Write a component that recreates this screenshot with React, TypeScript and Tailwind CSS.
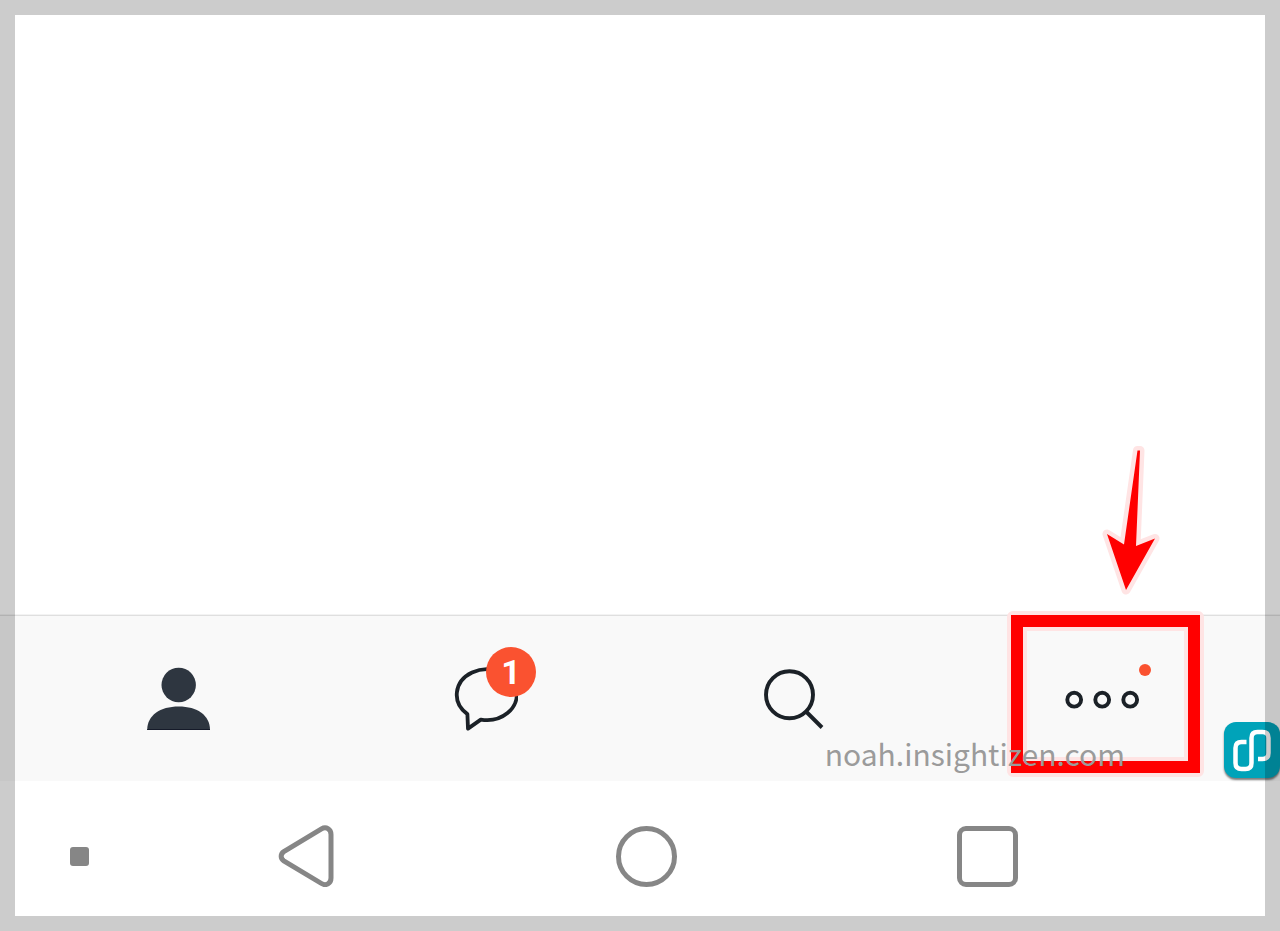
import type { ReactNode } from "react";

function TabButton({ label, children }: { label: string; children: ReactNode }) {
  return (
    <button
      type="button"
      aria-label={label}
      className="relative flex w-full items-center justify-center py-[50px]"
    >
      {children}
    </button>
  );
}

function FriendsIcon() {
  return (
    <svg width="64" height="65" viewBox="0 0 64 65" fill="#2e3640" aria-hidden="true">
      <circle cx="32.7" cy="19" r="17.2" />
      <path d="M1.2 64C1.2 49.5 14 40.6 32.7 40.6S64 49.5 64 64Z" />
      <path d="M1.2 63.5H64" stroke="#151a29" strokeWidth="1" />
    </svg>
  );
}

function ChatIcon() {
  return (
    <svg
      width="64"
      height="65"
      viewBox="0 0 64 65"
      fill="none"
      stroke="#1b2127"
      strokeWidth="3.8"
      strokeLinejoin="round"
      aria-hidden="true"
    >
      <path d="M13.4 48.1A30 25.4 0 1 1 26.8 53.6L14 62.6Z" />
    </svg>
  );
}

function SearchIcon() {
  return (
    <svg
      width="64"
      height="65"
      viewBox="0 0 64 65"
      fill="none"
      stroke="#1b2127"
      strokeWidth="3.9"
      aria-hidden="true"
    >
      <circle cx="27.5" cy="28.8" r="23.5" />
      <path d="M43.5 45L60 61.5" />
    </svg>
  );
}

function MoreIcon() {
  return (
    <svg
      width="80"
      height="65"
      viewBox="0 0 80 65"
      fill="none"
      stroke="#1b2127"
      strokeWidth="3.9"
      aria-hidden="true"
    >
      <circle cx="12.2" cy="33.7" r="6.9" />
      <circle cx="40.2" cy="33.7" r="6.9" />
      <circle cx="68.2" cy="33.7" r="6.9" />
    </svg>
  );
}

function Callout() {
  return (
    <div className="pointer-events-none absolute -top-[5px] left-1/2 z-10 h-[166px] w-[197px] -translate-x-[95px] rounded-md border-4 border-[#ffe4e4]">
      <div className="h-full border-[12px] border-[#ff0000]">
        <div className="h-full border-4 border-[#ffe4e4]" />
      </div>
      <svg
        className="absolute bottom-[174px] left-[89px]"
        width="60"
        height="156"
        viewBox="0 0 60 156"
        aria-hidden="true"
      >
        <path
          d="M37.5 7.5H40L36 103L55 95.5L26 147L7 91L24 101.5Z"
          fill="#ffe4e4"
          stroke="#ffe4e4"
          strokeWidth="9"
          strokeLinejoin="round"
        />
        <path d="M37.5 7.5H40L36 103L55 95.5L26 147L7 91L24 101.5Z" fill="#ff0000" />
      </svg>
    </div>
  );
}

export default function App() {
  return (
    <div className="relative flex min-h-screen flex-col overflow-hidden bg-white font-['Roboto',sans-serif]">
      <main className="flex-1" />

      <nav aria-label="Tabs" className="relative border-t border-[#f3f3f3] bg-[#f9f9f9]">
        <div className="grid grid-cols-4 border-t border-[#dfdfdf] px-6">
          <TabButton label="Friends">
            <FriendsIcon />
          </TabButton>
          <TabButton label="Chats">
            <span className="relative">
              <ChatIcon />
              <span className="absolute -top-[19px] left-8 flex size-[50px] items-center justify-center rounded-full bg-[#fa5230] text-[34px] leading-none font-bold text-white">
                1
              </span>
            </span>
          </TabButton>
          <TabButton label="Search">
            <SearchIcon />
          </TabButton>
          <TabButton label="More">
            <span className="relative">
              <MoreIcon />
              <span className="absolute -top-0.5 -right-[9px] size-3 rounded-full bg-[#fa5230]" />
            </span>
            <Callout />
          </TabButton>
        </div>
        <p className="pointer-events-none absolute right-[155px] bottom-[6px] z-20 font-['Noto_Sans_CJK_KR',sans-serif] text-[30px] leading-[44px] text-[#9b9b9b]">
          noah.insightizen.com
        </p>
        <button
          type="button"
          aria-label="Open app"
          className="absolute right-0 bottom-[3px] size-14 rounded-xl bg-[#00a3b9] shadow-[0_2px_2px_rgba(0,0,0,0.5)]"
        >
          <svg
            width="56"
            height="56"
            viewBox="0 0 56 56"
            fill="none"
            stroke="#ffffff"
            strokeWidth="4.5"
            aria-hidden="true"
          >
            <path d="M22.5 20H17.5Q11.5 20 11.5 26V41Q11.5 47 17.5 47H21.5Q27.5 47 27.5 41V16Q27.5 10 33.5 10H38.5Q44.5 10 44.5 16V31Q44.5 37 38.5 37H34" />
          </svg>
        </button>
      </nav>

      <nav
        aria-label="System"
        className="grid h-[150px] grid-cols-[112fr_341fr_341fr_341fr] items-center justify-items-center pr-[122px] pl-[23px]"
      >
        <button type="button" aria-label="Dock" className="size-[19px] rounded-[3px] bg-[#868686]" />
        <button type="button" aria-label="Back">
          <svg
            width="62"
            height="62"
            viewBox="0 0 62 62"
            fill="none"
            stroke="#868686"
            strokeWidth="5"
            aria-hidden="true"
          >
            <path d="M8.8 26.6L46.5 3.9C51 1.2 56 4 56 9.5V53C56 58.5 51 61.3 46.5 58.5L8.8 35.8C5.3 33.5 5.3 29 8.8 26.6Z" />
          </svg>
        </button>
        <button
          type="button"
          aria-label="Home"
          className="size-[61px] rounded-full border-[5px] border-[#868686]"
        />
        <button
          type="button"
          aria-label="Recent apps"
          className="size-[61px] rounded-[9px] border-[5px] border-[#868686]"
        />
      </nav>

      <div className="pointer-events-none absolute inset-0 z-30 border-[15px] border-black/20" />
    </div>
  );
}
